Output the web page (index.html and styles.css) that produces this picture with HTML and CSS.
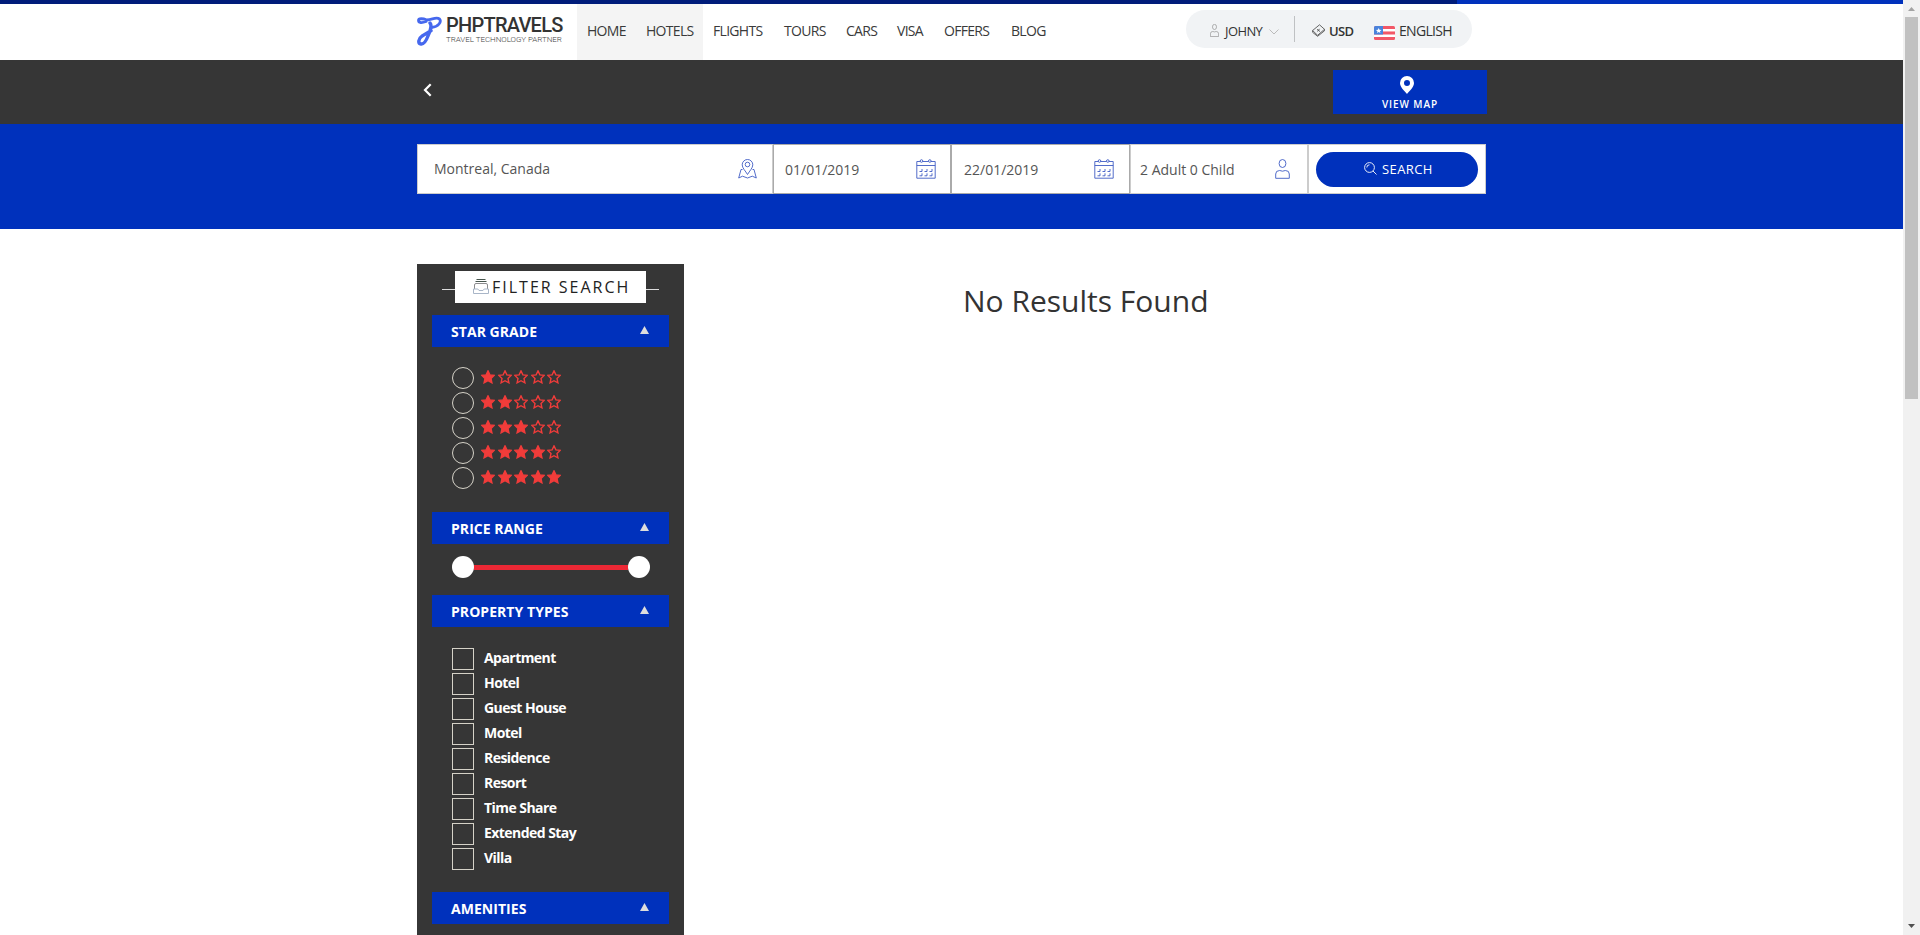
FILE: index.html
```html
<!DOCTYPE html>
<html lang="en">
<head>
<meta charset="utf-8">
<title>PHPTRAVELS - Hotels</title>
<link rel="stylesheet" href="styles.css">
</head>
<body>
<svg width="0" height="0" class="defs">
  <defs>
    <symbol id="star" viewBox="0 0 14 14"><path d="M7 .9l1.900 4 4.300.5-3.200 3 .9 4.400L7 10.700l-3.900 2.100.9-4.400-3.200-3 4.300-.5z"/></symbol>
    <symbol id="cal" viewBox="0 0 20 20"><path d="M.8 2.500h3.400M6.800 2.500h5.600M15 2.500h4.200v16.700H.8V2.500M.8 6.500h18.400"/><circle cx="5.500" cy="2" r="1.300"/><circle cx="13.800" cy="2" r="1.300"/><path d="M3.500 12.500H6V10M8.500 12.500H11V10M13.500 12.500H16V10M3.500 16.800H6V14.300M8.500 16.800H11V14.300M13.500 16.800H16V14.300"/></symbol>
    <symbol id="person" viewBox="0 0 15 20"><ellipse cx="7.500" cy="4.500" rx="3.400" ry="4"/><path d="M.7 19.300v-4.300q0-3.500 4-3.500 2.800 1.400 5.600 0 4 0 4 3.500v4.300z"/></symbol>
  </defs>
</svg>
<div class="window">
<div class="page">
  <div class="progress"><div class="progress-done"></div></div>
  <header class="header">
    <div class="container header-row">
      <a class="logo">
        <svg width="26" height="32" viewBox="0 0 26 32" fill="none" stroke="#4668ee" stroke-linecap="round"><path stroke-width="2.800" d="M9 7.500C5 9 1.500 9 1.500 6.500S6 4.500 10 6C15 6 19 2.500 22.500 5c2.500 3-1.500 7.800-7.500 8.300"/><path stroke-width="3.400" d="M13 9c2.500 2.800 0 8.300-2 13-2 5.200-4 8.500-7 8-3.500-.6-2.500-5.500 1-7.800 3-2.300 6.500-3.500 9-5.500"/></svg>
        <span class="logo-words"><b>PHPTRAVELS</b><small>TRAVEL TECHNOLOGY PARTNER</small></span>
      </a>
      <nav class="nav">
        <a class="home">HOME</a><a class="hotels">HOTELS</a><a class="flights">FLIGHTS</a><a class="tours">TOURS</a><a class="cars">CARS</a><a class="visa">VISA</a><a class="offers">OFFERS</a><a class="blog">BLOG</a>
      </nav>
      <div class="account">
        <svg class="user" width="9" height="13" viewBox="0 0 15 20" preserveAspectRatio="none"><use href="#person"/></svg>
        <span class="johny">JOHNY</span>
        <svg class="chev" width="10" height="6" viewBox="0 0 10 6"><path d="M.5.500L5 5 9.500.500"/></svg>
        <i class="divider"></i>
        <svg class="money" width="13" height="13" viewBox="0 0 13 13"><path d="M.6 6.500L7.500.8l5 4.500-6.900 6zM.6 6.500v1.800l5 4 6.900-5.500V5.300"/><path d="M5 5.300l3 2.200M7.500 4.800L5.500 7.500"/></svg>
        <span class="usd">USD</span>
        <svg class="flag" width="21" height="14" viewBox="0 0 21 14"><rect width="21" height="14" rx="1.500" fill="#f25767"/><path fill="#fff" d="M9 3h12v2.500H9zM0 8.500h21v2.500H0z"/><path fill="#f89ca5" d="M9 5.500h12V6H9z"/><path fill="#4a83dc" d="M0 1.500Q0 0 1.500 0H9v8.500H0z"/><path fill="#fff" d="M4.700 1.900l.8 1.800 2 .2-1.500 1.300.4 1.900-1.700-1-1.700 1 .4-1.900-1.500-1.300 2-.2z"/></svg>
        <span class="english">ENGLISH</span>
      </div>
    </div>
  </header>
  <div class="subbar">
    <div class="container subbar-row">
      <svg class="back" width="9" height="14" viewBox="0 0 9 14"><path d="M7.700 1.200L2 7l5.700 5.800"/></svg>
      <a class="view-map">
        <svg width="14" height="18" viewBox="0 0 14 18"><path fill="#fff" fill-rule="evenodd" d="M7 0a7 7 0 0 1 7 7c0 4-4.500 8-7 11C4.500 15 0 11 0 7a7 7 0 0 1 7-7zm0 4a3 3 0 1 0 0 6 3 3 0 0 0 0-6z"/></svg>
        <span>VIEW MAP</span>
      </a>
    </div>
  </div>
  <div class="searchbar">
    <div class="container">
      <form class="search">
        <div class="field place"><span>Montreal, Canada</span>
          <svg class="icon" width="19" height="20" viewBox="0 0 19 20"><path d="M9.500 15.500C7.500 12 4.200 9 4.200 5.800a5.300 5.300 0 0 1 10.600 0c0 3.200-3.300 6.200-5.300 9.700z"/><circle cx="9.500" cy="5.500" r="2.300"/><path d="M4.500 10.500H3L.7 19l3.800-1.800L9.500 19l4.800-1.800 4 1.800L16 10.500h-1.500"/></svg></div>
        <div class="field date"><span>01/01/2019</span><svg class="icon" width="20" height="20"><use href="#cal"/></svg></div>
        <div class="field date second"><span>22/01/2019</span><svg class="icon" width="20" height="20"><use href="#cal"/></svg></div>
        <div class="field guests"><span>2 Adult 0 Child</span><svg class="icon" width="15" height="20"><use href="#person"/></svg></div>
        <div class="field submit"><a class="btn"><svg width="13" height="13" viewBox="0 0 13 13"><circle cx="5.500" cy="5.500" r="4.900"/><path d="M9 9l3.500 3.500M2.800 5.500a2.700 2.700 0 0 1 2.700-2.700"/></svg><span>SEARCH</span></a></div>
      </form>
    </div>
  </div>
  <main class="container main">
    <aside class="sidebar">
      <div class="filter-title"><i></i>
        <div class="filter-box"><svg width="16" height="15" viewBox="0 0 16 15" fill="none"><path stroke="#46554d" d="M3.500.500h9M2.500 2.500h11"/><path stroke="#8d8d90" d="M1.500 10V6Q1.500 4.500 3 4.500h10q1.500 0 1.500 1.500v4"/><path stroke="#a9b6c8" d="M.5 10v4.500h15V10h-4.300L10 11.500H6L4.800 10z"/></svg><span>FILTER SEARCH</span></div>
      <i></i></div>
      <section><h4><span>STAR GRADE</span><svg width="9" height="8"><path d="M4.500 0L9 8H0z"/></svg></h4>
        <div class="options">
          <div class="option"><i class="radio"></i><span class="stars n1"><svg><use href="#star"/></svg><svg><use href="#star"/></svg><svg><use href="#star"/></svg><svg><use href="#star"/></svg><svg><use href="#star"/></svg></span></div>
          <div class="option"><i class="radio"></i><span class="stars n2"><svg><use href="#star"/></svg><svg><use href="#star"/></svg><svg><use href="#star"/></svg><svg><use href="#star"/></svg><svg><use href="#star"/></svg></span></div>
          <div class="option"><i class="radio"></i><span class="stars n3"><svg><use href="#star"/></svg><svg><use href="#star"/></svg><svg><use href="#star"/></svg><svg><use href="#star"/></svg><svg><use href="#star"/></svg></span></div>
          <div class="option"><i class="radio"></i><span class="stars n4"><svg><use href="#star"/></svg><svg><use href="#star"/></svg><svg><use href="#star"/></svg><svg><use href="#star"/></svg><svg><use href="#star"/></svg></span></div>
          <div class="option"><i class="radio"></i><span class="stars n5"><svg><use href="#star"/></svg><svg><use href="#star"/></svg><svg><use href="#star"/></svg><svg><use href="#star"/></svg><svg><use href="#star"/></svg></span></div>
        </div>
      </section>
      <section><h4><span>PRICE RANGE</span><svg width="9" height="8"><path d="M4.500 0L9 8H0z"/></svg></h4>
        <div class="slider"><i class="knob"></i><i class="track"></i><i class="knob"></i></div>
      </section>
      <section><h4><span>PROPERTY TYPES</span><svg width="9" height="8"><path d="M4.500 0L9 8H0z"/></svg></h4>
        <div class="options types">
          <div class="option"><i class="check"></i><b>Apartment</b></div>
          <div class="option"><i class="check"></i><b>Hotel</b></div>
          <div class="option"><i class="check"></i><b>Guest House</b></div>
          <div class="option"><i class="check"></i><b>Motel</b></div>
          <div class="option"><i class="check"></i><b>Residence</b></div>
          <div class="option"><i class="check"></i><b>Resort</b></div>
          <div class="option"><i class="check"></i><b>Time Share</b></div>
          <div class="option"><i class="check"></i><b>Extended Stay</b></div>
          <div class="option"><i class="check"></i><b>Villa</b></div>
        </div>
      </section>
      <section><h4><span>AMENITIES</span><svg width="9" height="8"><path d="M4.500 0L9 8H0z"/></svg></h4></section>
    </aside>
    <h1 class="empty"><span>No Results Found</span></h1>
  </main>
</div>
<div class="scrollbar">
  <svg width="7" height="4"><path fill="#a3a3a3" d="M3.500 0L7 4H0z"/></svg>
  <div class="thumb"></div>
  <svg class="down" width="7" height="4"><path fill="#505050" d="M0 0h7L3.500 4z"/></svg>
</div>
</div>
</body>
</html>
```
FILE: styles.css
```css
* { box-sizing: border-box; }
body { margin: 0; font-family: "Open Sans", "Noto Sans", sans-serif; color: #333; overflow: hidden; background: #fff; }
svg { display: block; flex: none; }
.defs { position: absolute; }
.window { display: flex; height: 935px; }
.page { flex: 1; display: flex; flex-direction: column; min-width: 0; }
.container { width: 1070px; margin-left: 417px; }
.progress { height: 4px; background: #0031bc; flex: none; }
.progress-done { height: 4px; width: 1457px; background: #001c7a; }
.header { height: 56px; flex: none; }
.header-row { display: flex; height: 56px; }
.logo { display: flex; width: 160px; padding-top: 10px; }
.logo-words { display: flex; flex-direction: column; margin-left: 3px; padding-top: 1px; }
.logo-words b { font: 500 20px/20px Roboto, sans-serif; letter-spacing: -.75px; color: #333; white-space: nowrap; }
.logo-words small { font: 300 8px/9px Roboto, sans-serif; color: #444; white-space: nowrap; letter-spacing: -.05px; }
.nav { display: flex; font-size: 14px; line-height: 53px; font-weight: 400; color: #3a3a3a; letter-spacing: -.7px; white-space: nowrap; }
.nav a { padding-left: 10px; }
.home { width: 59px; background: #f4f4f4; }
.hotels { width: 67px; background: #f4f4f4; }
.flights { width: 71px; }
.tours { width: 62px; }
.cars { width: 51px; }
.visa { width: 47px; }
.offers { width: 67px; }
.blog { width: 60px; }
.account { display: flex; align-items: center; width: 286px; height: 38px; margin: 6px 0 0 125px; border-radius: 19px; background: #f1f3f5; padding-left: 24px; font-size: 13px; letter-spacing: -.6px; white-space: nowrap; color: #333; }
.account span { padding-top: 3px; }
.account svg { fill: none; stroke: #888; }
.user { margin-top: 2px; }
.johny { width: 44px; margin-left: 6px; }
.account .chev { stroke: #bbb; margin-top: 5px; }
.divider { width: 1px; height: 26px; background: #bfc1c3; margin-left: 15px; }
.account .money { margin: 3px 0 0 17px; stroke: #555; stroke-width: .9; }
.usd { width: 26px; margin-left: 4px; font-weight: 600; }
.english { font-size: 14px; letter-spacing: -.7px; }
.account .flag { margin: 8px 4px 0 19px; stroke: none; }
.subbar { height: 64px; background: #363636; flex: none; }
.subbar-row { display: flex; justify-content: space-between; }
.back { margin: 23px 0 0 6px; fill: none; stroke: #fff; stroke-width: 2.200; }
.view-map { width: 154px; height: 44px; margin-top: 10px; background: #0031bc; display: flex; flex-direction: column; align-items: center; padding: 6px 6px 0 0; }
.view-map span { color: #fff; font-size: 10px; line-height: 14px; letter-spacing: .9px; font-weight: 600; margin: 3px 0 0 6px; white-space: nowrap; }
.searchbar { height: 105px; background: #0031bc; padding-top: 20px; flex: none; }
.search { display: flex; width: 1069px; height: 50px; background: #fff; }
.field { display: flex; align-items: center; justify-content: space-between; border: 1px solid #ccc; font-size: 14px; color: #555; white-space: nowrap; }
.icon { fill: none; stroke: #3f5cc4; stroke-width: .9; }
.place { width: 356px; padding: 0 15px 0 16px; }
.place span { padding-bottom: 2px; }
.date { width: 178px; border-color: #aaa; padding: 0 14px 0 11px; }
.second { width: 179px; padding: 0 15px 0 12px; }
.guests { width: 178px; padding: 0 17px 0 9px; }
.submit { width: 178px; padding-left: 7px; }
.btn { width: 162px; height: 35px; border-radius: 18px; background: #0031bc; color: #fff; display: flex; align-items: center; font-size: 13px; letter-spacing: .4px; padding-left: 48px; }
.btn svg { fill: none; stroke: #fff; stroke-width: .9; margin: -1px 5px 0 0; }
.main { display: flex; padding-top: 35px; flex: 1; min-height: 0; }
.sidebar { width: 267px; background: #363636; padding: 7px 15px 0; overflow: hidden; }
.filter-title { display: flex; padding: 0 10px; height: 44px; }
.filter-title i { flex: 1; height: 1px; background: #ddd; margin-top: 18px; }
.filter-box { width: 191px; height: 32px; background: #fff; display: flex; align-items: center; padding-left: 18px; font-size: 16px; letter-spacing: 2px; color: #222; white-space: nowrap; font-weight: 500; }
.filter-box svg { margin: -2px 3px 0 0; }
h4 { margin: 0; height: 32px; background: #0031bc; color: #fff; font-size: 14px; line-height: 33px; font-weight: 700; display: flex; justify-content: space-between; padding: 0 20px 0 19px; letter-spacing: .05px; white-space: nowrap; }
h4 svg { fill: #ddd; margin-top: 11px; }
.options { padding: 20px 0 20px 20px; }
.option { display: flex; height: 25px; }
.radio { width: 22px; height: 22px; border: 1px solid #d5d2c8; border-radius: 50%; }
.check { width: 22px; height: 22px; border: 1px solid #d5d2c8; }
.stars { display: flex; gap: 2.600px; padding: 3px 0 0 7px; }
.stars svg { width: 14px; height: 14px; fill: none; stroke: #f13c3a; stroke-width: 1.400; }
.n1 svg:nth-child(-n+1), .n2 svg:nth-child(-n+2), .n3 svg:nth-child(-n+3), .n4 svg:nth-child(-n+4), .n5 svg { fill: #f13c3a; }
.slider { display: flex; align-items: center; padding: 12px 19px 17px 20px; }
.knob { width: 22px; height: 22px; border-radius: 50%; background: #fff; }
.track { height: 5px; flex: 1; background: #ec2835; }
.types { padding: 21px 0 19px 20px; }
.types b { font-size: 14px; line-height: 19px; color: #fff; font-weight: 700; letter-spacing: -.55px; margin-left: 10px; }
.empty { margin: 16px 0 0 279px; font-size: 30px; line-height: 42px; font-weight: 400; color: #333; white-space: nowrap; }
.scrollbar { width: 17px; background: #f1f1f1; display: flex; flex-direction: column; align-items: center; padding-top: 7px; }
.thumb { width: 13px; height: 382px; margin-top: 6px; background: #c1c1c1; }
.down { margin: auto 0 7px; }
```
